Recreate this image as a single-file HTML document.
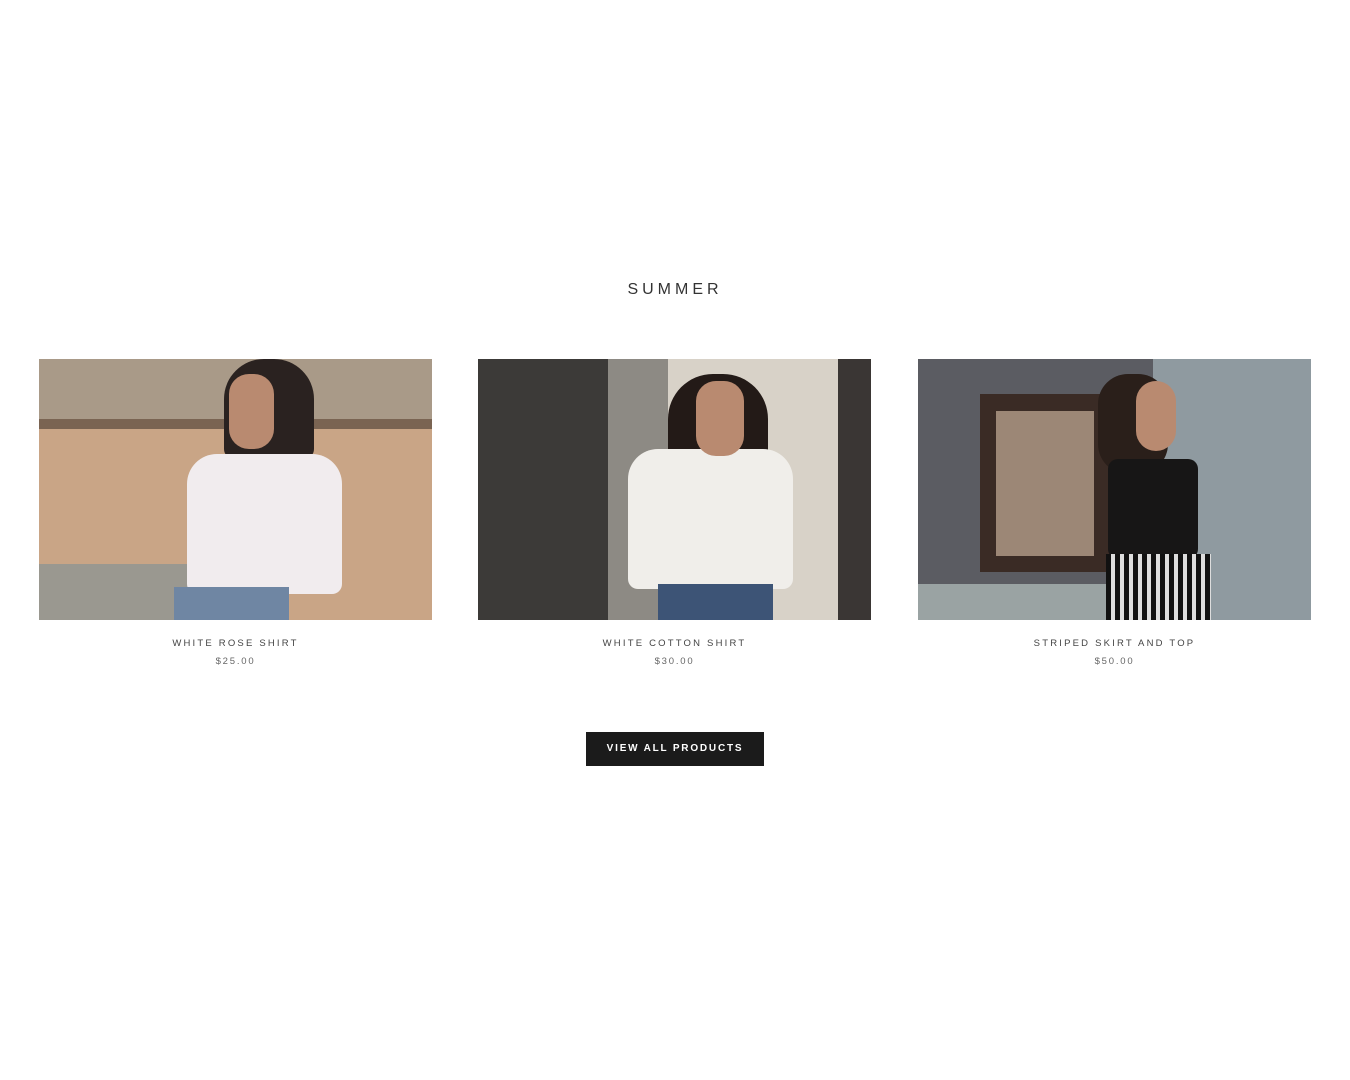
<!DOCTYPE html>
<html><head><meta charset="utf-8"><style>
body{margin:0;width:1350px;height:1080px;background:#fff;font-family:"Liberation Sans",sans-serif;position:relative;overflow:hidden}
.t{position:absolute;width:100%;text-align:center}
.img{position:absolute;top:359px;width:393px;height:261px;overflow:hidden}
.img div{position:absolute}
.name{position:absolute;top:638px;width:393px;text-align:center;font-size:9.5px;letter-spacing:2.2px;color:#444}
.price{position:absolute;top:656px;width:393px;text-align:center;font-size:9.5px;letter-spacing:1.8px;color:#666}
</style></head><body>
<div class="t" style="top:281px;font-size:16px;letter-spacing:4px;color:#333">SUMMER</div>

<div class="img" style="left:39px;background:#c9a586">
 <div style="left:0;top:0;width:393px;height:70px;background:#a99a88"></div>
 <div style="left:0;top:60px;width:393px;height:10px;background:#7a6452"></div>
 <div style="left:0;top:205px;width:150px;height:56px;background:#9a9890"></div>
 <div style="left:185px;top:0;width:90px;height:100px;background:#2a2220;border-radius:40px 40px 10px 10px"></div>
 <div style="left:148px;top:95px;width:155px;height:140px;background:#f1ecee;border-radius:30px 30px 10px 10px"></div>
 <div style="left:135px;top:228px;width:115px;height:40px;background:#6f86a3"></div>
 <div style="left:190px;top:15px;width:45px;height:75px;background:#b98a70;border-radius:20px"></div>
</div>
<div class="name" style="left:39px">WHITE ROSE SHIRT</div>
<div class="price" style="left:39px">$25.00</div>

<div class="img" style="left:478px;background:#d8d2c8">
 <div style="left:0;top:0;width:130px;height:261px;background:#3c3a38"></div>
 <div style="left:130px;top:0;width:60px;height:261px;background:#8d8a84"></div>
 <div style="left:360px;top:0;width:33px;height:261px;background:#3a3634"></div>
 <div style="left:190px;top:15px;width:100px;height:110px;background:#231a17;border-radius:45px 45px 10px 10px"></div>
 <div style="left:150px;top:90px;width:165px;height:140px;background:#f0eeea;border-radius:30px 30px 10px 10px"></div>
 <div style="left:180px;top:225px;width:115px;height:36px;background:#3d5476"></div>
 <div style="left:218px;top:22px;width:48px;height:75px;background:#b98a70;border-radius:20px"></div>
</div>
<div class="name" style="left:478px">WHITE COTTON SHIRT</div>
<div class="price" style="left:478px">$30.00</div>

<div class="img" style="left:918px;background:#5b5c62">
 <div style="left:235px;top:0;width:158px;height:261px;background:#8f9aa0"></div>
 <div style="left:0;top:225px;width:235px;height:36px;background:#9aa3a3"></div>
 <div style="left:62px;top:35px;width:130px;height:178px;background:#3a2b25"></div>
 <div style="left:78px;top:52px;width:98px;height:145px;background:#9c8776"></div>
 <div style="left:180px;top:15px;width:70px;height:100px;background:#2a1f1a;border-radius:30px"></div>
 <div style="left:190px;top:100px;width:90px;height:100px;background:#171616;border-radius:10px"></div>
 <div style="left:188px;top:195px;width:105px;height:66px;background:repeating-linear-gradient(90deg,#111 0 5px,#ddd 5px 9px)"></div>
 <div style="left:218px;top:22px;width:40px;height:70px;background:#b98a70;border-radius:20px"></div>
</div>
<div class="name" style="left:918px">STRIPED SKIRT AND TOP</div>
<div class="price" style="left:918px">$50.00</div>

<div style="position:absolute;left:586px;top:732px;width:178px;height:34px;background:#1b1b1b;color:#fff;font-size:10px;font-weight:bold;letter-spacing:1.8px;line-height:34px;text-align:center">VIEW ALL PRODUCTS</div>
</body></html>
